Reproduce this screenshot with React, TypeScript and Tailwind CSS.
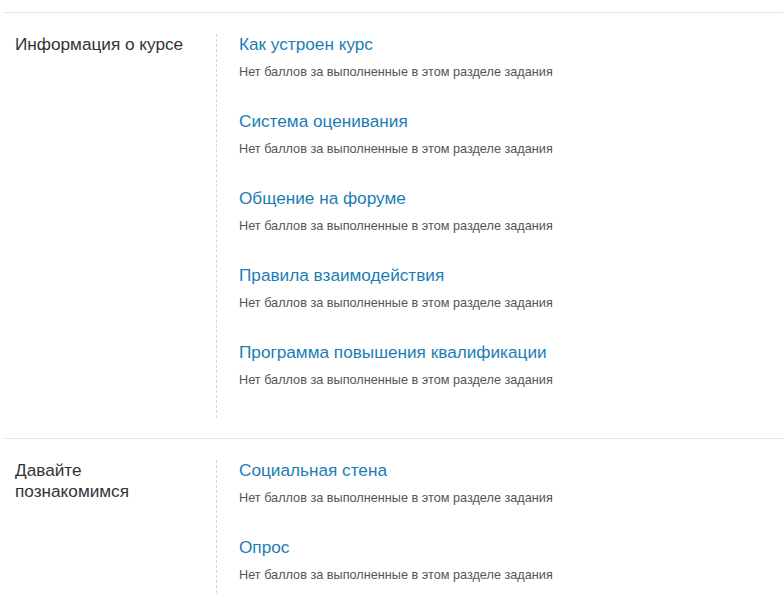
const sections = [
  {
    title: "Информация о курсе",
    items: [
      "Как устроен курс",
      "Система оценивания",
      "Общение на форуме",
      "Правила взаимодействия",
      "Программа повышения квалификации",
    ],
  },
  {
    title: "Давайте познакомимся",
    items: ["Социальная стена", "Опрос"],
  },
]

export default function App() {
  return (
    <div
      className="min-h-screen bg-white pt-3 pl-1"
      style={{ fontFamily: '"Liberation Sans", Arial, sans-serif' }}
    >
      {sections.map((s) => (
        <section key={s.title} className="border-t border-[#e3e3e3] pt-[21px] pb-5 flex">
          <div className="w-[212px] shrink-0 pl-[11px]">
            <h3 className="w-[180px] text-[17.2px] leading-[21px] text-[#333]">{s.title}</h3>
          </div>
          <ul className="flex-1 border-l border-dashed border-[#d6d6d6] pl-[22px] pb-[30px]">
            {s.items.map((item, i) => (
              <li key={item} className={i > 0 ? "mt-[31px]" : ""}>
                <a href="#" className="block text-[17.2px] leading-[21px] text-[#1b7db5]">
                  {item}
                </a>
                <p className="mt-[9px] text-[12.7px] leading-[16px] text-[#555]">
                  Нет баллов за выполненные в этом разделе задания
                </p>
              </li>
            ))}
          </ul>
        </section>
      ))}
    </div>
  )
}
